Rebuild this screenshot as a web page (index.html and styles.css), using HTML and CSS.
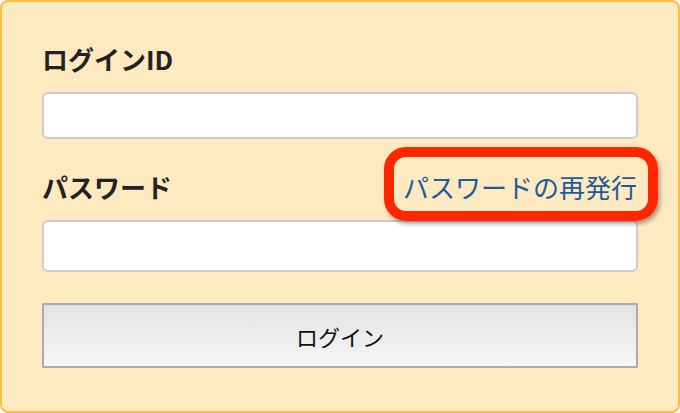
FILE: index.html
```html
<!DOCTYPE html>
<html lang="ja">
<head>
<meta charset="utf-8">
<title>ログイン</title>
<link rel="stylesheet" href="styles.css">
</head>
<body>
<form class="panel">
  <label class="label" for="login-id">ログインID</label>
  <input class="field field-id" id="login-id" type="text">
  <div class="row">
    <label class="label" for="password">パスワード</label>
    <a class="reissue" href="#">パスワードの再発行</a>
  </div>
  <input class="field field-pw" id="password" type="password">
  <button class="submit" type="button">ログイン</button>
</form>
</body>
</html>
```

FILE: styles.css
```css
* { box-sizing: border-box; }
html, body { margin: 0; padding: 0; }
body {
  width: 680px;
  height: 413px;
  background: #ffffff;
  font-family: "Noto Sans CJK JP", "Noto Sans", sans-serif;
}
.panel {
  width: 680px;
  height: 413px;
  border: 2px solid #fbbf3c;
  border-radius: 8px;
  background: #fee9c0;
  padding: 42px 40px 0 40px;
  display: flex;
  flex-direction: column;
  margin: 0;
}
.label {
  display: block;
  font-size: 26px;
  line-height: 30px;
  font-weight: 700;
  color: #222222;
}
.field {
  display: block;
  width: 100%;
  border: 2px solid #cccccc;
  border-radius: 6px;
  background: #ffffff;
  margin: 0;
  padding: 0 10px;
  outline: none;
}
.field-id { height: 47px; margin-top: 18px; }
.row {
  margin-top: 33px;
  display: flex;
  justify-content: space-between;
  align-items: center;
}
.reissue {
  position: relative;
  font-size: 26px;
  line-height: 30px;
  color: #1d5c98;
  text-decoration: none;
  margin-right: 1px;
}
.reissue::after {
  content: "";
  position: absolute;
  top: -25px;
  bottom: -19px;
  left: -19px;
  right: -21px;
  border: 10px solid #ff2600;
  border-radius: 22px;
  box-shadow: 2px 3px 4px rgba(0, 0, 0, 0.35);
  pointer-events: none;
}
.field-pw { height: 52px; margin-top: 18px; }
.submit {
  display: block;
  width: 100%;
  height: 65px;
  margin-top: 31px;
  border: 2px solid #ababab;
  border-radius: 1px;
  background: linear-gradient(#e3e3e3, #f5f5f5);
  font-family: "Noto Sans CJK JP", "Noto Sans", sans-serif;
  font-size: 22px;
  color: #111111;
  padding: 0;
}
```
